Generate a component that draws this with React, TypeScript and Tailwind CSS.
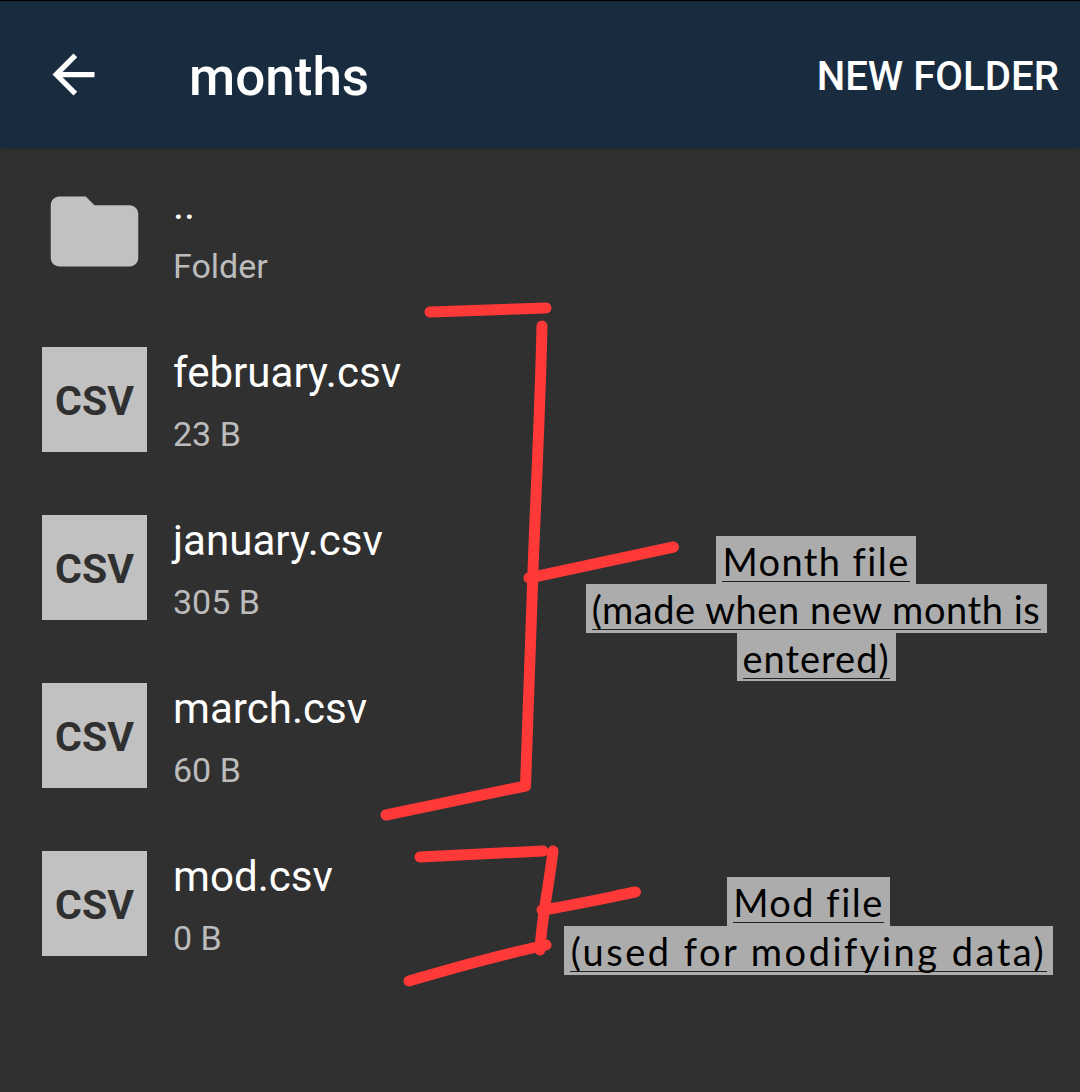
type FileEntry = { name: string; size: string };

const files: FileEntry[] = [
  { name: 'february.csv', size: '23 B' },
  { name: 'january.csv', size: '305 B' },
  { name: 'march.csv', size: '60 B' },
  { name: 'mod.csv', size: '0 B' },
];

function Header() {
  return (
    <header className="flex h-[148px] shrink-0 items-center border-t border-black bg-[#192c3f] pr-[21px] pl-[42px] text-white shadow-[0_1px_4px_rgba(0,0,0,0.2)]">
      <svg viewBox="0 0 24 24" className="size-[63px] shrink-0" fill="currentColor">
        <path d="M20 11H7.83l5.59-5.59L12 4l-8 8 8 8 1.41-1.41L7.83 13H20v-2z" />
      </svg>
      <h1 className="ml-[84px] flex-1 pt-[5px] text-[53px] leading-none font-medium">months</h1>
      <button className="pt-[6px] text-[40.2px] leading-none font-medium whitespace-nowrap">NEW FOLDER</button>
    </header>
  );
}

function Details({ name, size }: FileEntry) {
  return (
    <div className="ml-[26px] flex flex-col whitespace-nowrap">
      <span className="h-[61px] text-[42.1px] leading-[52px] text-white">{name}</span>
      <span className="text-[34px] leading-[53px] text-[#bcbcbc]">{size}</span>
    </div>
  );
}

/* Highlighted, underlined caption line */
function NoteLine({ text, box, type }: { text: string; box: string; type: string }) {
  return (
    <div className={`flex justify-center bg-[#acacac] px-[6px] ${box}`}>
      <div className="flex h-[46px] w-full justify-center border-b border-[#222]">
        <span className={`text-[38px] leading-[50px] whitespace-pre ${type}`}>{text}</span>
      </div>
    </div>
  );
}

export default function App() {
  return (
    <div className="relative flex h-[1092px] w-[1080px] flex-col overflow-hidden bg-[#303030] font-['Roboto',sans-serif]">
      <Header />
      <main className="flex flex-col pt-[31px] pl-[42px]">
        <div className="flex h-[168px]">
          <svg viewBox="0 0 24 24" className="size-[105px] shrink-0" fill="#c1c1c1">
            <path d="M10 4H4c-1.1 0-2 .9-2 2v12c0 1.1.9 2 2 2h16c1.1 0 2-.9 2-2V8c0-1.1-.9-2-2-2h-8l-2-2z" />
          </svg>
          <Details name=".." size="Folder" />
        </div>
        {files.map((file) => (
          <div key={file.name} className="flex h-[168px]">
            <div className="flex size-[105px] shrink-0 items-center justify-center bg-[#c1c1c1] pt-[4px] text-[41px] leading-none font-bold text-[#303030]">
              CSV
            </div>
            <Details {...file} />
          </div>
        ))}
      </main>

      <svg
        viewBox="0 0 1080 1092"
        className="pointer-events-none absolute inset-0"
        fill="none"
        stroke="#ff3838"
        strokeWidth="11"
        strokeLinecap="round"
        strokeLinejoin="round"
      >
        <path d="M430 312L546 308" />
        <path d="M542 326C540 420 534 530 532 600L525.500 786L386 815" />
        <path d="M529 578L673.500 547" />
        <path d="M420 857L543 851" />
        <path d="M553 851C549 885 542 916 540 950" />
        <path d="M542 910C570 906 610 897 635.500 892" />
        <path d="M546 945C500 955 450 969 409 981" />
      </svg>

      <div className="absolute top-[536px] left-[585px] flex w-[462px] flex-col items-center font-['Lato',sans-serif] text-black">
        <NoteLine text="Month file" box="h-[48px] w-[200px]" type="tracking-[1.4px]" />
        <NoteLine text="(made when new month is" box="h-[48.500px] w-[461px]" type="tracking-[0.55px]" />
        <NoteLine text="entered)" box="h-[48px] w-[159px]" type="tracking-[1px]" />
      </div>
      <div className="absolute top-[876.500px] left-[564px] flex w-[489px] flex-col items-center font-['Lato',sans-serif] text-black">
        <NoteLine text="Mod file" box="h-[49px] w-[163px]" type="tracking-[1.5px]" />
        <NoteLine text="(used for modifying data)" box="h-[49px] w-[489px]" type="tracking-[2.5px]" />
      </div>
    </div>
  );
}
